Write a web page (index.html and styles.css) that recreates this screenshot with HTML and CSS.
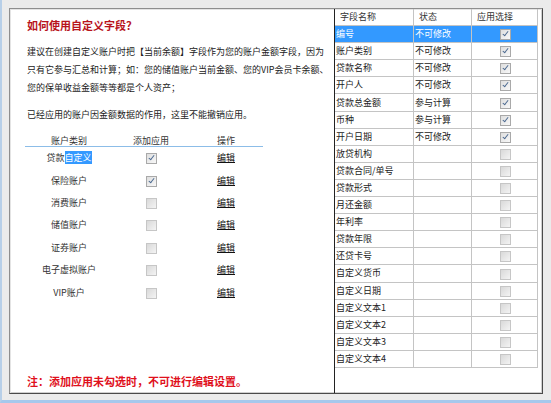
FILE: index.html
```html
<!DOCTYPE html>
<html lang="zh-CN">
<head>
  <meta charset="UTF-8">
  <title>自定义字段</title>
  <link rel="stylesheet" href="styles.css">
</head>
<body>
  <div class="frame">
    <div class="guide">
      <h1>如何使用自定义字段？</h1>
      <p>建议在创建自定义账户时把【当前余额】字段作为您的账户金额字段，因为只有它参与汇总和计算；如：您的储值账户当前金额、您的VIP会员卡余额、您的保单收益金额等等都是个人资产；</p>
      <p class="tight">已经应用的账户因金额数据的作用，这里不能撤销应用。</p>

      <table class="accounts">
        <thead>
          <tr><th class="c1">账户类别</th><th class="c2">添加应用</th><th class="c3">操作</th></tr>
        </thead>
        <tbody>
          <tr><td>贷款<span class="sel">自定义</span></td><td><span class="cb on"></span></td><td><a href="#">编辑</a></td></tr>
          <tr><td>保险账户</td><td><span class="cb on"></span></td><td><a href="#">编辑</a></td></tr>
          <tr><td>消费账户</td><td><span class="cb"></span></td><td><a href="#">编辑</a></td></tr>
          <tr><td>储值账户</td><td><span class="cb"></span></td><td><a href="#">编辑</a></td></tr>
          <tr><td>证券账户</td><td><span class="cb"></span></td><td><a href="#">编辑</a></td></tr>
          <tr><td>电子虚拟账户</td><td><span class="cb"></span></td><td><a href="#">编辑</a></td></tr>
          <tr><td>VIP账户</td><td><span class="cb"></span></td><td><a href="#">编辑</a></td></tr>
        </tbody>
      </table>

      <div class="note">注：添加应用未勾选时，不可进行编辑设置。</div>
    </div>

    <div class="fields">
      <table class="grid">
        <thead>
          <tr><th class="f1">字段名称</th><th class="f2">状态</th><th class="f3">应用选择</th></tr>
        </thead>
        <tbody>
          <tr class="current"><td>编号</td><td>不可修改</td><td><span class="cb on"></span></td></tr>
          <tr><td>账户类别</td><td>不可修改</td><td><span class="cb on"></span></td></tr>
          <tr><td>贷款名称</td><td>不可修改</td><td><span class="cb on"></span></td></tr>
          <tr><td>开户人</td><td>不可修改</td><td><span class="cb on"></span></td></tr>
          <tr><td>贷款总金额</td><td>参与计算</td><td><span class="cb on"></span></td></tr>
          <tr><td>币种</td><td>参与计算</td><td><span class="cb on"></span></td></tr>
          <tr><td>开户日期</td><td>不可修改</td><td><span class="cb on"></span></td></tr>
          <tr><td>放贷机构</td><td></td><td><span class="cb"></span></td></tr>
          <tr><td>贷款合同/单号</td><td></td><td><span class="cb"></span></td></tr>
          <tr><td>贷款形式</td><td></td><td><span class="cb"></span></td></tr>
          <tr><td>月还金额</td><td></td><td><span class="cb"></span></td></tr>
          <tr><td>年利率</td><td></td><td><span class="cb"></span></td></tr>
          <tr><td>贷款年限</td><td></td><td><span class="cb"></span></td></tr>
          <tr><td>还贷卡号</td><td></td><td><span class="cb"></span></td></tr>
          <tr><td>自定义货币</td><td></td><td><span class="cb"></span></td></tr>
          <tr><td>自定义日期</td><td></td><td><span class="cb"></span></td></tr>
          <tr><td>自定义文本1</td><td></td><td><span class="cb"></span></td></tr>
          <tr><td>自定义文本2</td><td></td><td><span class="cb"></span></td></tr>
          <tr><td>自定义文本3</td><td></td><td><span class="cb"></span></td></tr>
          <tr><td>自定义文本4</td><td></td><td><span class="cb"></span></td></tr>
        </tbody>
      </table>
    </div>
  </div>
</body>
</html>
```

FILE: styles.css
```css
html, body {
  margin: 0;
  padding: 0;
  height: 100%;
}

body {
  box-sizing: border-box;
  background: #ebebeb;
  border-left: 2px solid #b7cfe8;
  border-bottom: 3px solid #a6c8ec;
  font-family: "Noto Sans CJK SC", "Noto Sans", sans-serif;
  font-size: 9px;
  color: #222;
}

.frame {
  display: flex;
  width: 534px;
  height: 386px;
  margin: 8px 0 0 7px;
  box-sizing: border-box;
  background: #fff;
  border: 1px solid #8e8e8e;
  border-right-color: #4a4a4a;
  border-bottom-color: #4a4a4a;
  box-shadow: inset 1px 1px 0 #e4e4e4, inset -1px -1px 0 #cfcfcf;
}

/* left: explanation and account list */
.guide {
  width: 325px;
  display: flex;
  flex-direction: column;
  padding: 9px 0 5px 17px;
  box-sizing: border-box;
  border-right: 1px solid #222;
}

.guide h1 {
  margin: 0;
  font-size: 11px;
  line-height: 14px;
  font-weight: bold;
  color: #b8141c;
}

.guide p {
  margin: 11px 0 0;
  width: 304px;
  line-height: 18px;
  color: #222;
}

.guide p.tight {
  margin-top: 9px;
}

.accounts {
  margin: 12px 0 0 -2px;
  border-collapse: collapse;
  width: 238px;
}

.accounts th {
  font-weight: normal;
  line-height: 10px;
  padding: 0;
  height: 10px;
  border-bottom: 1px solid #8cbde8;
  color: #333;
}

.accounts .c1 { width: 88px; }
.accounts .c2 { width: 76px; }
.accounts .c3 { width: 74px; }

.accounts td {
  height: 22.4px;
  padding: 0;
  text-align: center;
  vertical-align: middle;
  line-height: 12px;
  color: #333;
}

.accounts a {
  color: #111;
  text-decoration: underline;
}

.sel {
  background: #3399ff;
  color: #fff;
}

.note {
  margin-top: auto;
  font-size: 11px;
  line-height: 14px;
  font-weight: bold;
  color: #e0101c;
}

/* right: field grid */
.fields {
  flex: 1;
}

.grid {
  border-collapse: collapse;
  width: 187px;
  table-layout: fixed;
}

.grid .f1 { width: 73px; }
.grid .f2 { width: 52px; }
.grid .f3 { width: 60px; }

.grid th,
.grid td {
  height: 16.1px;
  padding: 0 0 0 1px;
  line-height: 16px;
  border: 1px solid #c4c4c4;
  text-align: left;
  white-space: nowrap;
  overflow: hidden;
}

.grid th {
  font-weight: normal;
  padding-left: 5px;
  border-top: none;
  color: #333;
}

.grid td:last-child {
  text-align: center;
}

.grid tr.current td {
  background: #3399ff;
  color: #fff;
}

.grid td:first-child,
.grid th:first-child {
  border-left: none;
}

/* checkbox look-alike */
.cb {
  position: relative;
  display: inline-block;
  width: 9px;
  height: 9px;
  vertical-align: middle;
  border: 1px solid #c6c6c6;
  background: linear-gradient(135deg, #d9d9d9, #f4f4f4);
}

.cb.on {
  border-color: #a9a9a9;
  background: linear-gradient(135deg, #dedede, #f8f8f8);
}

.cb.on::after {
  content: "";
  position: absolute;
  left: 3px;
  top: 0;
  width: 2px;
  height: 5px;
  border: solid #4b6990;
  border-width: 0 1.5px 1.5px 0;
  transform: rotate(38deg);
}
```
